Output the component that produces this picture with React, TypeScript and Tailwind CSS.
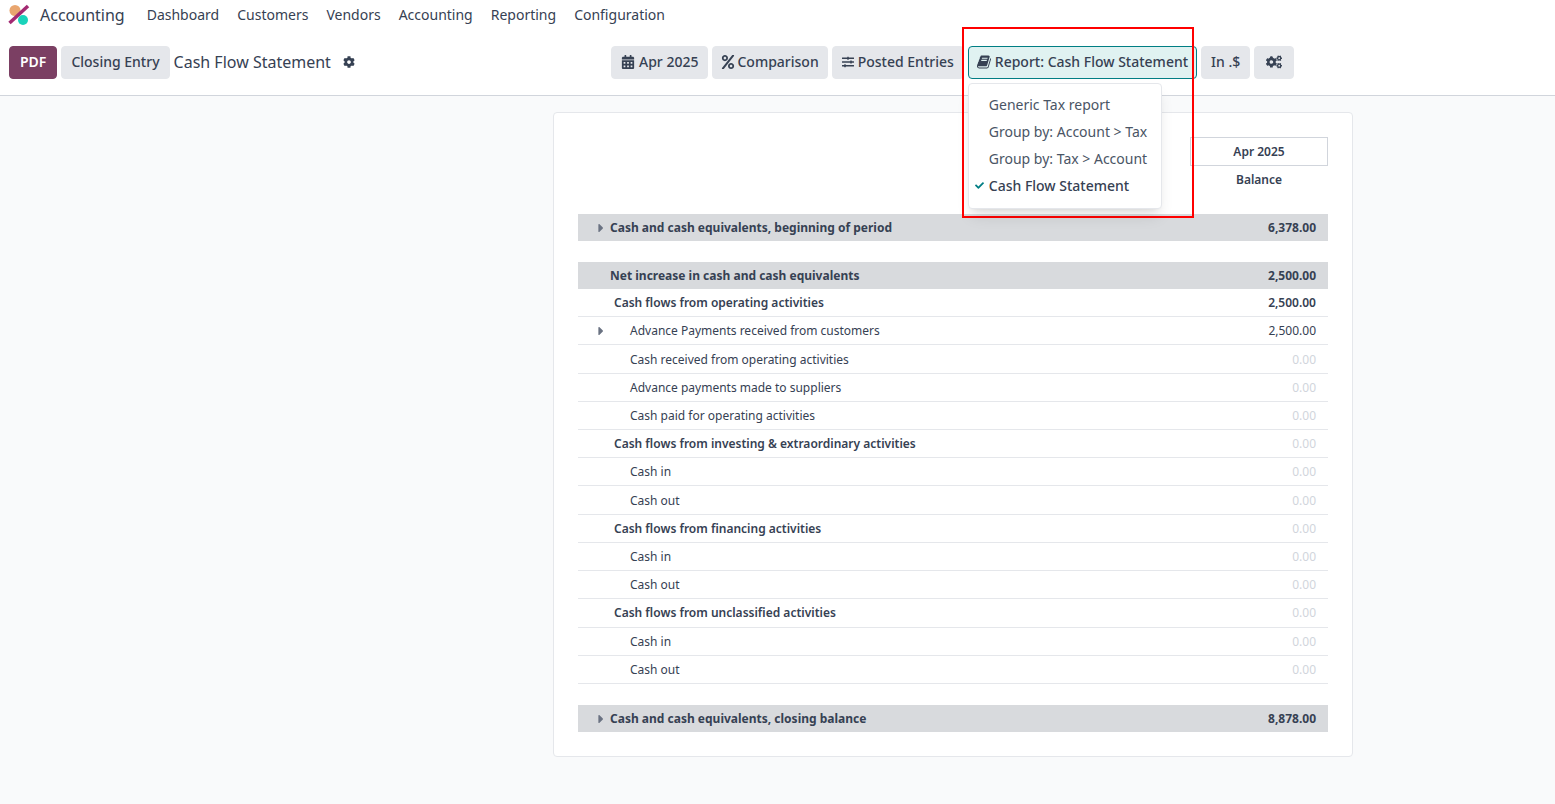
import { FaCalendarAlt, FaCaretRight, FaCheck, FaCog, FaCogs, FaPercent, FaSlidersH } from "react-icons/fa";
import type { ReactNode } from "react";

function Logo() {
  return (
    <svg viewBox="0 0 24 24" className="h-6 w-6">
      <circle cx="7" cy="7.5" r="5.5" fill="#e9a66f" />
      <circle cx="15" cy="17" r="5" fill="#1ad3bb" />
      <path d="M1.5 20 L20 3" stroke="#a32a72" strokeWidth="3.5" fill="none" />
    </svg>
  );
}

function BookIcon() {
  return (
    <svg viewBox="0 0 1664 1792" className="h-4 w-3.5" fill="currentColor">
      <path d="M1639 478q40 57 18 129l-275 906q-19 64-76.5 107.5t-122.5 43.5h-923q-77 0-148.5-53.5t-99.5-131.5q-24-67-2-127 0-4 3-27t4-37q1-8-3-21.5t-3-19.5q2-11 8-21t16.5-23.5 16.5-23.5q23-38 45-91.5t30-91.5q3-10 .5-30t-.5-28q3-11 17-28t17-23q21-36 42-92t25-90q1-9-2.5-32t.5-28q4-13 22-30.5t22-22.5q19-26 42.5-84.5t27.5-96.5q1-8-3-25.5t-2-26.5q2-8 9-18t18-23 17-21q8-12 16.5-30.5t15-35 16-36 19.5-32 26.5-23.5 36-11.5 47.5 5.5l-1 3q38-9 51-9h761q74 0 114 56t18 130l-274 906q-36 119-71.5 153.5t-128.5 34.5h-869q-27 0-38 15-11 16-1 43 24 70 144 70h923q29 0 56-15.5t35-41.5l300-987q7-22 5-57 38 15 59 43zm-1064 2q-4 13 2 22.5t20 9.5h608q13 0 25.5-9.5t16.5-22.5l21-64q4-13-2-22.5t-20-9.5h-608q-13 0-25.5 9.5t-16.5 22.5zm-83 256q-4 13 2 22.5t20 9.5h608q13 0 25.5-9.5t16.5-22.5l21-64q4-13-2-22.5t-20-9.5h-608q-13 0-25.5 9.5t-16.5 22.5z" />
    </svg>
  );
}

function Btn({ children, active, wide, tight }: { children: ReactNode; active?: boolean; wide?: boolean; tight?: boolean }) {
  return (
    <div
      className={clsx(
        "flex items-center rounded border pt-1 pb-1.5 leading-normal font-medium text-gray-700",
        active ? "border-[#017e84] bg-[#e0f2f1]" : "border-gray-200 bg-gray-200",
        wide ? "px-2.25" : "px-2",
        tight ? "gap-0.5" : "gap-1",
      )}
    >
      {children}
    </div>
  );
}

type Row = { label: string; value: string; kind: "head" | "item"; caret?: boolean };

const rows: Row[] = [
  { label: "Cash flows from operating activities", value: "2,500.00", kind: "head" },
  { label: "Advance Payments received from customers", value: "2,500.00", kind: "item", caret: true },
  { label: "Cash received from operating activities", value: "0.00", kind: "item" },
  { label: "Advance payments made to suppliers", value: "0.00", kind: "item" },
  { label: "Cash paid for operating activities", value: "0.00", kind: "item" },
  { label: "Cash flows from investing & extraordinary activities", value: "0.00", kind: "head" },
  { label: "Cash in", value: "0.00", kind: "item" },
  { label: "Cash out", value: "0.00", kind: "item" },
  { label: "Cash flows from financing activities", value: "0.00", kind: "head" },
  { label: "Cash in", value: "0.00", kind: "item" },
  { label: "Cash out", value: "0.00", kind: "item" },
  { label: "Cash flows from unclassified activities", value: "0.00", kind: "head" },
  { label: "Cash in", value: "0.00", kind: "item" },
  { label: "Cash out", value: "0.00", kind: "item" },
];

function Total({ label, value, caret }: { label: string; value: string; caret?: boolean }) {
  return (
    <div className="flex h-6.75 items-center bg-[#d8dadd] pr-3 font-bold text-gray-700">
      <div className="flex w-8 justify-end pr-0.5 text-sm text-gray-500">{caret && <FaCaretRight />}</div>
      <div className="flex-1">{label}</div>
      <div>{value}</div>
    </div>
  );
}

export default function App() {
  return (
    <div className="min-h-screen bg-gray-50 text-xs text-gray-700" style={{ fontFamily: '"Noto Sans", sans-serif' }}>
      <div className="border-b border-gray-300 bg-white">
        <nav className="flex h-7.5 items-center px-2 text-sm">
          <Logo />
          <span className="ml-2 text-base">Accounting</span>
          <div className="ml-5.5 flex gap-4.5">
            {["Dashboard", "Customers", "Vendors", "Accounting", "Reporting", "Configuration"].map((n) => (
              <span key={n}>{n}</span>
            ))}
          </div>
        </nav>
        <div className="flex h-16.25 items-start pl-2.25 pt-4 text-sm">
          <div className="flex w-150 items-center gap-1">
            <div className="flex items-center rounded border border-[#7b3f63] bg-[#7b3f63] px-2.5 pt-1 pb-1.5 leading-normal font-semibold text-white">PDF</div>
            <Btn wide>Closing Entry</Btn>
            <span className="mb-0.5 text-base">Cash Flow Statement</span>
            <FaCog className="mb-0.5 ml-2 text-xs" />
          </div>
          <div className="ml-0.5 flex gap-1">
            <Btn wide>
              <FaCalendarAlt size={14} /> Apr 2025
            </Btn>
            <Btn tight>
              <FaPercent size={14} /> Comparison
            </Btn>
            <Btn wide>
              <FaSlidersH className="text-xs" /> Posted Entries
            </Btn>
            <div className="relative">
              <Btn active>
                <BookIcon /> Report: Cash Flow Statement
              </Btn>
              <div className="absolute left-0 top-full z-10 mt-1 flex w-48.5 flex-col rounded border border-gray-200 bg-white pt-1.75 pb-2.25 shadow-lg">
                {["Generic Tax report", "Group by: Account > Tax", "Group by: Tax > Account"].map((t) => (
                  <div key={t} className="flex h-6.75 items-center pl-5 font-normal text-gray-600">
                    {t}
                  </div>
                ))}
                <div className="relative flex h-6.75 items-center pl-5 font-medium">
                  <FaCheck className="absolute left-1.5 text-[#017e84]" size={9} />
                  Cash Flow Statement
                </div>
              </div>
            </div>
            <Btn wide>In .$</Btn>
            <Btn wide>
              <div className="p-0.5">
                <FaCogs size={16} />
              </div>
            </Btn>
          </div>
        </div>
      </div>

      <div className="pt-4">
        <div className="ml-[553px] w-[800px] rounded border border-gray-200 bg-white p-6">
          <div className="flex justify-end">
            <div className="w-34.5 text-center font-semibold">
              <div className="flex h-7.25 items-center justify-center border border-gray-300">Apr 2025</div>
              <div className="flex h-7 items-center justify-center">Balance</div>
            </div>
          </div>
          <div className="mt-5">
            <Total caret label="Cash and cash equivalents, beginning of period" value="6,378.00" />
          </div>
          <div className="mt-5.25">
            <Total label="Net increase in cash and cash equivalents" value="2,500.00" />
          </div>
          <div className="grid h-[395px] auto-rows-fr">
            {rows.map((r, i) => (
              <div key={i} className="flex items-center border-b border-gray-200 pt-px pr-3">
                <div className="flex w-8 justify-end pr-0.5 text-sm text-gray-500">{r.caret && <FaCaretRight />}</div>
                <div className={r.kind === "head" ? "flex-1 pl-1 font-semibold" : "flex-1 pl-5"}>{r.label}</div>
                <div className={r.value === "0.00" ? "text-gray-300" : r.kind === "head" ? "font-semibold" : ""}>{r.value}</div>
              </div>
            ))}
          </div>
          <div className="mt-5.25">
            <Total caret label="Cash and cash equivalents, closing balance" value="8,878.00" />
          </div>
        </div>
      </div>

      <div className="absolute left-[962px] top-6.75 h-47.75 w-[232px] border-2 border-[#f00]" />
    </div>
  );
}

function clsx(...parts: string[]) {
  return parts.join(" ");
}
